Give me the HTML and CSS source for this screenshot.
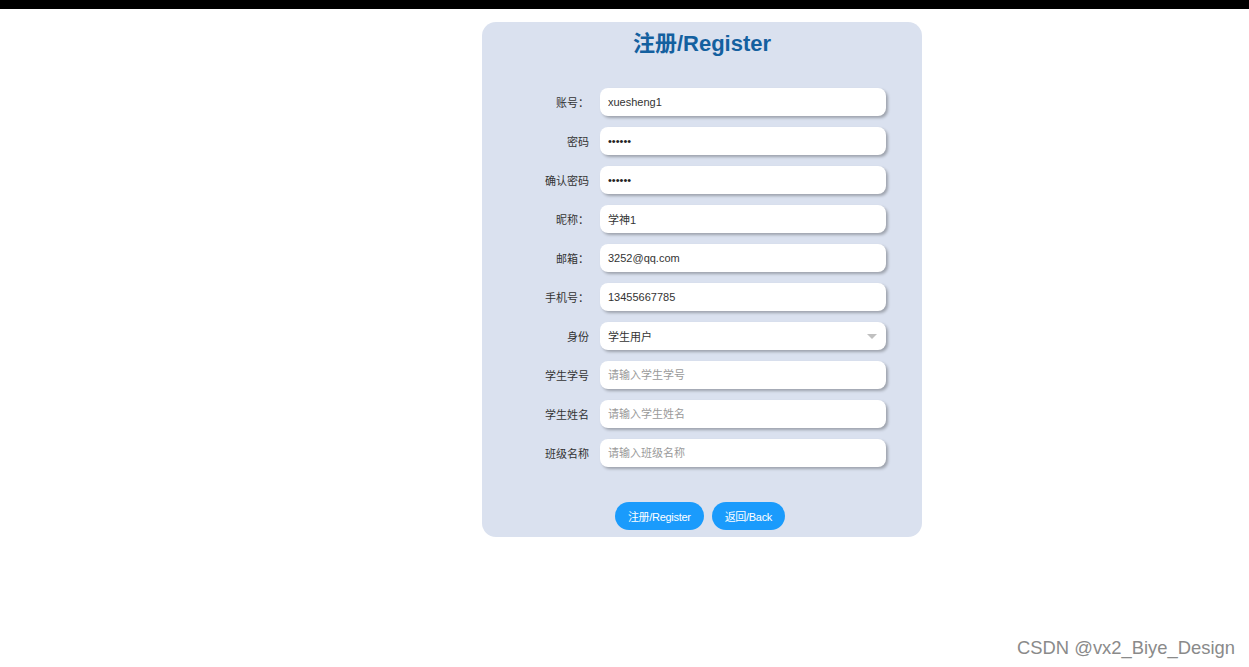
FILE: index.html
```html
<!DOCTYPE html>
<html lang="zh-CN">
<head>
    <meta charset="UTF-8">
    <meta name="viewport" content="width=device-width, initial-scale=1.0">
    <title>注册/Register</title>
    <link rel="stylesheet" href="styles.css">
</head>
<body>
<div class="topbar"></div>
<div class="page">
    <div class="register-box">
        <h1 class="title">注册/Register</h1>
        <form class="form">
            <div class="form-row">
                <label>账号：</label>
                <input type="text" value="xuesheng1">
            </div>
            <div class="form-row">
                <label>密码</label>
                <input type="password" value="123456">
            </div>
            <div class="form-row">
                <label>确认密码</label>
                <input type="password" value="123456">
            </div>
            <div class="form-row">
                <label>昵称：</label>
                <input type="text" value="学神1">
            </div>
            <div class="form-row">
                <label>邮箱：</label>
                <input type="text" value="3252@qq.com">
            </div>
            <div class="form-row">
                <label>手机号：</label>
                <input type="text" value="13455667785">
            </div>
            <div class="form-row">
                <label>身份</label>
                <div class="select">
                    <span>学生用户</span>
                    <i class="arrow"></i>
                </div>
            </div>
            <div class="form-row">
                <label>学生学号</label>
                <input type="text" class="focused" placeholder="请输入学生学号">
            </div>
            <div class="form-row">
                <label>学生姓名</label>
                <input type="text" placeholder="请输入学生姓名">
            </div>
            <div class="form-row">
                <label>班级名称</label>
                <input type="text" placeholder="请输入班级名称">
            </div>
            <div class="actions">
                <button type="button">注册/Register</button>
                <button type="button">返回/Back</button>
            </div>
        </form>
    </div>
</div>
<div class="watermark">CSDN @vx2_Biye_Design</div>
</body>
</html>
```

FILE: styles.css
```css
body {
    margin: 0;
    padding: 0;
    background-color: #fff;
    font-family: "Liberation Sans", Arial, "Noto Sans CJK SC", sans-serif;
    color: #333;
    height: 667px;
    overflow: hidden;
}
.topbar {
    height: 9px;
    background-color: #000;
}
.page {
    padding: 13px 0 0 482px;
}
.register-box {
    width: 440px;
    box-sizing: border-box;
    background-color: #dae1ef;
    border-radius: 14px;
    padding: 8px 0 7px;
}
.title {
    margin: 0;
    text-align: center;
    font-size: 22px;
    line-height: 28px;
    font-weight: bold;
    color: #14609f;
}
.form {
    margin-top: 30px;
}
.form-row {
    display: flex;
    align-items: center;
    margin-bottom: 11px;
}
.form-row label {
    flex: 0 0 118px;
    padding-right: 11px;
    box-sizing: border-box;
    text-align: right;
    font-size: 11px;
    color: #333;
}
.form-row input,
.select {
    width: 286px;
    height: 28px;
    box-sizing: border-box;
    border: none;
    border-radius: 8px;
    background-color: #fff;
    box-shadow: 2px 2px 3px rgba(0, 0, 0, 0.28);
    padding: 0 8px;
    font-family: "Liberation Sans", Arial, "Noto Sans CJK SC", sans-serif;
    font-size: 11px;
    color: #333;
    outline: none;
}
.form-row input[type="password"] {
    color: #222;
}
.form-row input::placeholder {
    color: #9a9a9a;
}
.select {
    display: flex;
    align-items: center;
    justify-content: space-between;
    padding-right: 9px;
}
.arrow {
    width: 0;
    height: 0;
    border-left: 5px solid transparent;
    border-right: 5px solid transparent;
    border-top: 5px solid #c0c0c0;
}
.actions {
    display: flex;
    justify-content: center;
    gap: 8px;
    padding-right: 4px;
    margin-top: 35px;
}
.actions button {
    height: 28px;
    padding: 0 13px;
    border: none;
    border-radius: 14px;
    background-color: #1a9bfc;
    color: #fff;
    font-family: "Liberation Sans", Arial, "Noto Sans CJK SC", sans-serif;
    font-size: 11px;
    letter-spacing: -0.3px;
    cursor: pointer;
}
.watermark {
    position: absolute;
    right: 14px;
    top: 637px;
    font-family: "Liberation Sans", Arial, sans-serif;
    font-size: 18.4px;
    color: #8a8a8a;
    text-shadow: 0 0 1px #fff;
}
```
